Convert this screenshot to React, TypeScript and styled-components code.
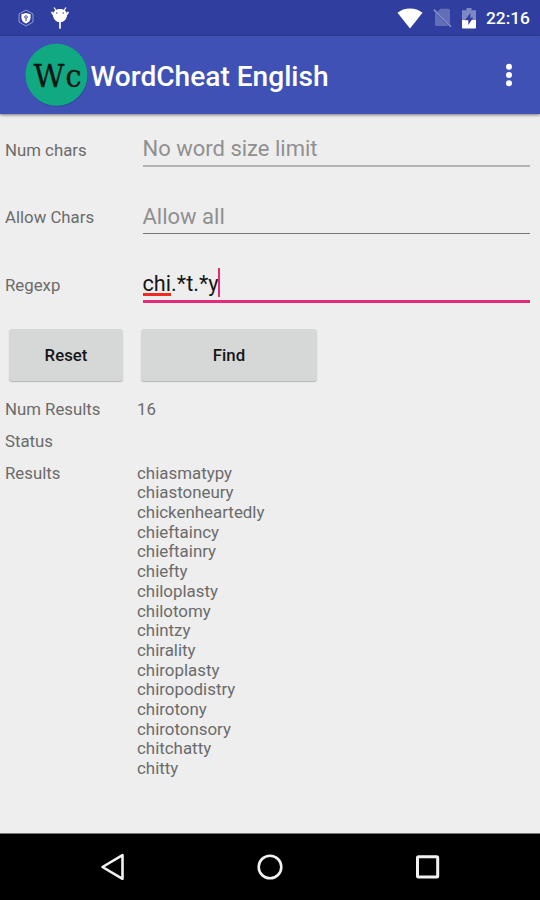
import React from "react";
import styled, { createGlobalStyle } from "styled-components";

const GlobalStyle = createGlobalStyle`
  * { box-sizing: border-box; }
  body { margin: 0; font-family: Roboto, sans-serif; background: #eeeeee; }
`;

const Screen = styled.div`
  display: flex;
  flex-direction: column;
  width: 540px;
  height: 900px;
  overflow: hidden;
  background: #eeeeee;
`;

const StatusBar = styled.header`
  display: flex;
  align-items: center;
  justify-content: space-between;
  height: 36px;
  flex: none;
  padding: 0 11px 0 17px;
  background: #303f9f;
`;

const StatusGroup = styled.div<{ $gap: number }>`
  display: flex;
  align-items: center;
  gap: ${(p) => p.$gap}px;
`;

const Clock = styled.span`
  width: 43px;
  color: #fff;
  font-size: 17.3px;
  font-weight: 500;
  line-height: 36px;
  white-space: nowrap;
`;

const AppBar = styled.div`
  display: flex;
  align-items: center;
  height: 78px;
  flex: none;
  padding: 0 24px 0 25px;
  background: #3f51b5;
  box-shadow: 0 1px 3px rgba(0, 0, 0, 0.5);
`;

const Title = styled.h1`
  flex: 1;
  margin: 3px 0 0 1.5px;
  color: #fff;
  font-size: 28.1px;
  font-weight: 500;
  line-height: 36px;
  white-space: nowrap;
`;

const MenuButton = styled.button`
  display: flex;
  padding: 0;
  border: 0;
  background: none;
`;

const Content = styled.main`
  flex: 1;
  min-height: 0;
  color: #6b6b6b;
  font-size: 16.8px;
`;

const FieldRow = styled.label`
  display: grid;
  grid-template-columns: 138px 387px;
  height: 67.5px;
  padding-left: 5px;
`;

const FieldLabel = styled.span`
  padding-top: 25.5px;
  line-height: 20px;
`;

const Field = styled.span<{ $tone: "hint" | "blank" | "focused" }>`
  display: flex;
  align-items: flex-start;
  height: ${(p) => (p.$tone === "focused" ? 53.5 : p.$tone === "hint" ? 53 : 52)}px;
  padding-top: 21px;
  border-bottom: ${(p) =>
    p.$tone === "focused" ? "3px solid #e32b78" : p.$tone === "hint" ? "2px solid #b3b3b3" : "1.5px solid #777"};
  margin-left: -0.5px;
  color: ${(p) => (p.$tone === "focused" ? "#161616" : "#909090")};
  font-size: ${(p) => (p.$tone === "focused" ? 21.7 : 22)}px;
  line-height: 28px;
  white-space: nowrap;
`;

const Misspelled = styled.span`
  height: 26px;
  border-bottom: 3px solid #ee2c24;
`;

const Caret = styled.span`
  width: 2px;
  height: 29px;
  margin: -2px 0 0 -1px;
  background: #e32b78;
`;

const Actions = styled.div`
  display: flex;
  gap: 18px;
  padding: 12px 0 0 9px;
`;

const ActionButton = styled.button<{ $width: number }>`
  width: ${(p) => p.$width}px;
  height: 52px;
  padding: 0;
  border: 0;
  border-radius: 3px;
  background: #d6d8d7;
  box-shadow: 0 1px 1px rgba(0, 0, 0, 0.24);
  color: #161616;
  font: 500 16.8px Roboto, sans-serif;
`;

const Summary = styled.dl`
  display: grid;
  grid-template-columns: 132px 1fr;
  row-gap: 12px;
  margin: 0;
  padding: 19.7px 0 0 5px;
  line-height: 19.7px;
`;

const Term = styled.dt`
  margin: 0;
`;

const Detail = styled.dd`
  margin: 0;
`;

const WordList = styled.ul`
  margin: 0;
  padding: 0;
  list-style: none;
  font-size: 16.9px;
`;

const NavBar = styled.nav`
  display: flex;
  align-items: center;
  justify-content: space-between;
  height: 67px;
  flex: none;
  padding: 0 99px 0 99px;
  background: #000;
  border-top: 1px solid #777;
`;

const words = [
  "chiasmatypy", "chiastoneury", "chickenheartedly", "chieftaincy",
  "chieftainry", "chiefty", "chiloplasty", "chilotomy", "chintzy", "chirality",
  "chiroplasty", "chiropodistry", "chirotony", "chirotonsory", "chitchatty", "chitty",
];

const ShieldIcon = () => (
  <svg width="18" height="18" viewBox="0 0 18 18">
    <path d="M9 1l7 4v8l-7 4-7-4V5z" fill="none" stroke="#8f99d3" strokeWidth="1" />
    <path d="M9 4l4.6 1.3v3.4c0 2.7-1.8 4.6-4.6 5.7-2.8-1.1-4.6-3-4.6-5.7V5.3z" fill="#fff" />
    <circle cx="9" cy="8" r="1.3" fill="none" stroke="#303f9f" strokeWidth=".9" />
    <path d="M9 9.5v2.500" stroke="#303f9f" strokeWidth="1" />
  </svg>
);

const DroidIcon = () => (
  <svg width="18" height="22" viewBox="0 0 18 22">
    <path d="M3 .5l2 3M15 .5l-2 3" stroke="#fff" strokeWidth="1.3" />
    <path d="M9 2c4.3 0 7 2.3 7 6 0 4-3 7.2-7 7.2S2 12 2 8c0-3.700 2.700-6 7-6z" fill="#fff" />
    <path d="M1 5.5l2 3M17 5.5l-2 3M9 15v6" stroke="#fff" strokeWidth="1.7" strokeLinecap="round" />
    <circle cx="5.8" cy="6" r=".7" fill="#303f9f" />
    <circle cx="12.2" cy="6" r=".7" fill="#303f9f" />
  </svg>
);

const WifiIcon = () => (
  <svg width="26" height="21" viewBox="0 0 26 21">
    <path d="M.5 4.8C4 2 8 .5 13 .5s9 1.500 12.500 4.300L13 20.500z" fill="#fff" />
  </svg>
);

const NoSimIcon = () => (
  <svg width="19" height="20" viewBox="0 0 19 20">
    <path d="M7.500 .8h8a1.500 1.500 0 0 1 1.500 1.500v14.200L4.300 3.800zM2 4.500L15.500 18H3.500A1.500 1.500 0 0 1 2 16.500z" fill="#626fb8" />
    <path d="M.8 1.600L18 18.800" stroke="#8790c9" strokeWidth="1.600" />
  </svg>
);

const BatteryIcon = () => (
  <svg width="14" height="21" viewBox="0 0 14 21">
    <path d="M4.500 0h5v2.200H14V12H0V2.200h4.500z" fill="#7e88c5" />
    <path d="M0 12h14v7.500a1 1 0 0 1-1 1H1a1 1 0 0 1-1-1z" fill="#fff" />
    <path d="M8.300 5L3 12.300h3.300V17L11.200 9.800H8.300z" fill="#303f9f" />
  </svg>
);

const Logo = () => (
  <svg width="64" height="66" viewBox="0 0 64 66">
    <circle cx="32" cy="33.8" r="31" fill="#283b86" opacity=".5" />
    <circle cx="31.5" cy="32.8" r="31" fill="#10a982" />
    <g fontFamily="DejaVu Serif, serif" fontSize="32" fill="#0b1512" stroke="#0b1512" strokeWidth=".3">
      <text x="8.5" y="44.500" textLength="31" lengthAdjust="spacingAndGlyphs">W</text>
      <text x="40.5" y="44.500" textLength="16" lengthAdjust="spacingAndGlyphs">c</text>
    </g>
  </svg>
);

export default function App() {
  return (
    <>
      <GlobalStyle />
      <Screen>
        <StatusBar>
          <StatusGroup $gap={16}>
            <ShieldIcon />
            <DroidIcon />
          </StatusGroup>
          <StatusGroup $gap={10}>
            <WifiIcon />
            <NoSimIcon />
            <BatteryIcon />
            <Clock>22:16</Clock>
          </StatusGroup>
        </StatusBar>
        <AppBar>
          <Logo />
          <Title>WordCheat English</Title>
          <MenuButton aria-label="More options">
            <svg width="14" height="26" viewBox="0 0 14 26" fill="#fff">
              <circle cx="7" cy="4.7" r="3" />
              <circle cx="7" cy="13" r="3" />
              <circle cx="7" cy="21.3" r="3" />
            </svg>
          </MenuButton>
        </AppBar>
        <Content>
          <FieldRow>
            <FieldLabel>Num chars</FieldLabel>
            <Field $tone="hint">No word size limit</Field>
          </FieldRow>
          <FieldRow>
            <FieldLabel>Allow Chars</FieldLabel>
            <Field $tone="blank">Allow all</Field>
          </FieldRow>
          <FieldRow>
            <FieldLabel>Regexp</FieldLabel>
            <Field $tone="focused">
              <Misspelled>chi</Misspelled>.*t.*y<Caret />
            </Field>
          </FieldRow>
          <Actions>
            <ActionButton $width={114}>Reset</ActionButton>
            <ActionButton $width={176}>Find</ActionButton>
          </Actions>
          <Summary>
            <Term>Num Results</Term>
            <Detail>16</Detail>
            <Term>Status</Term>
            <Detail />
            <Term>Results</Term>
            <Detail>
              <WordList>
                {words.map((word) => (
                  <li key={word}>{word}</li>
                ))}
              </WordList>
            </Detail>
          </Summary>
        </Content>
        <NavBar>
          <svg width="28" height="30" viewBox="0 0 28 30">
            <path d="M3.5 15L23.5 3.2v23.6z" fill="none" stroke="#f2f2f2" strokeWidth="2.6" strokeLinejoin="round" />
          </svg>
          <svg width="28" height="28" viewBox="0 0 28 28">
            <circle cx="14" cy="14" r="11.3" fill="none" stroke="#f2f2f2" strokeWidth="2.6" />
          </svg>
          <svg width="28" height="28" viewBox="0 0 28 28">
            <rect x="4.5" y="3.8" width="20.2" height="20.2" rx="1" fill="none" stroke="#f2f2f2" strokeWidth="3" />
          </svg>
        </NavBar>
      </Screen>
    </>
  );
}
